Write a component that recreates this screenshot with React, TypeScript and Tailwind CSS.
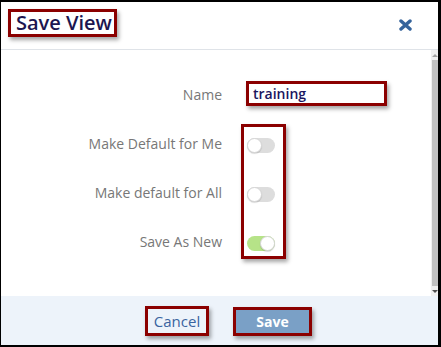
import React from "react";

const redBox = "border-[3px] border-[#8b0000] shadow-[2px_3px_4px_rgba(0,0,0,0.35)]";

function Toggle({ on }: { on?: boolean }) {
  return (
    <div
      className={
        "relative w-[28px] h-[15px] rounded-full " +
        (on ? "bg-[#b6e388]" : "bg-[#dddddd]")
      }
    >
      <div
        className={
          "absolute top-0 w-[15px] h-[15px] rounded-full bg-white border border-[#d6d6d6] shadow-[0_1px_1px_rgba(0,0,0,0.15)] " +
          (on ? "left-[13px]" : "left-0")
        }
      />
    </div>
  );
}

export default function App() {
  return (
    <div
      className="w-[441px] h-[347px] bg-white border-l border-t-2 border-r-[3px] border-b-2 border-black flex flex-col overflow-hidden"
      style={{ fontFamily: '"Open Sans", "Liberation Sans", sans-serif' }}
    >
      {/* Header */}
      <div className="h-[48px] flex items-start justify-between border-b border-[#dfe3e8] shrink-0">
        <div className={"ml-[7px] mt-[7px] h-[28px] w-[109px] flex items-center pl-[5px] " + redBox}>
          <span className="text-[20px] font-semibold text-[#1c1650] leading-none">Save View</span>
        </div>
        <div className="mt-[17px] mr-[26px]">
          <svg width="13" height="12" viewBox="0 0 13 12">
            <path d="M2 2 L11 10 M11 2 L2 10" stroke="#35639b" strokeWidth="3.4" strokeLinecap="round" />
          </svg>
        </div>
      </div>

      {/* Body */}
      <div className="flex h-[246px] shrink-0">
        <div className="flex-1 flex pt-[20px]">
          <div className="w-[221px] flex flex-col text-[14px] text-[#777777]">
            <div className="h-[49px] flex items-center justify-end">Name</div>
            <div className="h-[49px] flex items-center justify-end">Make Default for Me</div>
            <div className="h-[49px] flex items-center justify-end">Make default for All</div>
            <div className="h-[49px] flex items-center justify-end">Save As New</div>
          </div>
          <div className="ml-[19px] flex flex-col">
            <div className="h-[49px] pt-[11px]">
              <div className={"ml-[5px] w-[141px] h-[25px] flex items-center pl-[4px] bg-white " + redBox}>
                <span className="text-[14px] font-semibold text-[#1a1660] leading-none">training</span>
              </div>
            </div>
            <div className={"mt-[5px] w-[45px] h-[135px] pl-[3px] pt-[11px] flex flex-col gap-[34px] " + redBox}>
              <Toggle />
              <Toggle />
              <Toggle on />
            </div>
          </div>
        </div>
        {/* Scrollbar */}
        <div className="w-[7px] bg-[#f0f0f0] flex flex-col items-center">
          <div className="h-[10px] flex items-center justify-center">
            <div className="w-0 h-0 border-l-[3px] border-r-[3px] border-b-[3px] border-l-transparent border-r-transparent border-b-[#a3a3a3]" />
          </div>
          <div className="w-[6px] flex-1 bg-[#c1c1c1]" />
          <div className="h-[10px] flex items-center justify-center">
            <div className="w-0 h-0 border-l-[3px] border-r-[3px] border-t-[3px] border-l-transparent border-r-transparent border-t-[#505050]" />
          </div>
        </div>
      </div>

      {/* Footer */}
      <div className="flex-1 bg-[#edf3fa] flex items-start pt-[10px]">
        <button className={"ml-[144px] w-[64px] h-[30px] flex items-center justify-center text-[15px] text-[#3a64a0] bg-transparent " + redBox}>
          Cancel
        </button>
        <button className={"ml-[24px] w-[79px] h-[29px] mt-[1px] flex items-center justify-center text-[14px] font-bold text-white bg-[#7aa0c6] " + redBox}>
          Save
        </button>
      </div>
    </div>
  );
}
